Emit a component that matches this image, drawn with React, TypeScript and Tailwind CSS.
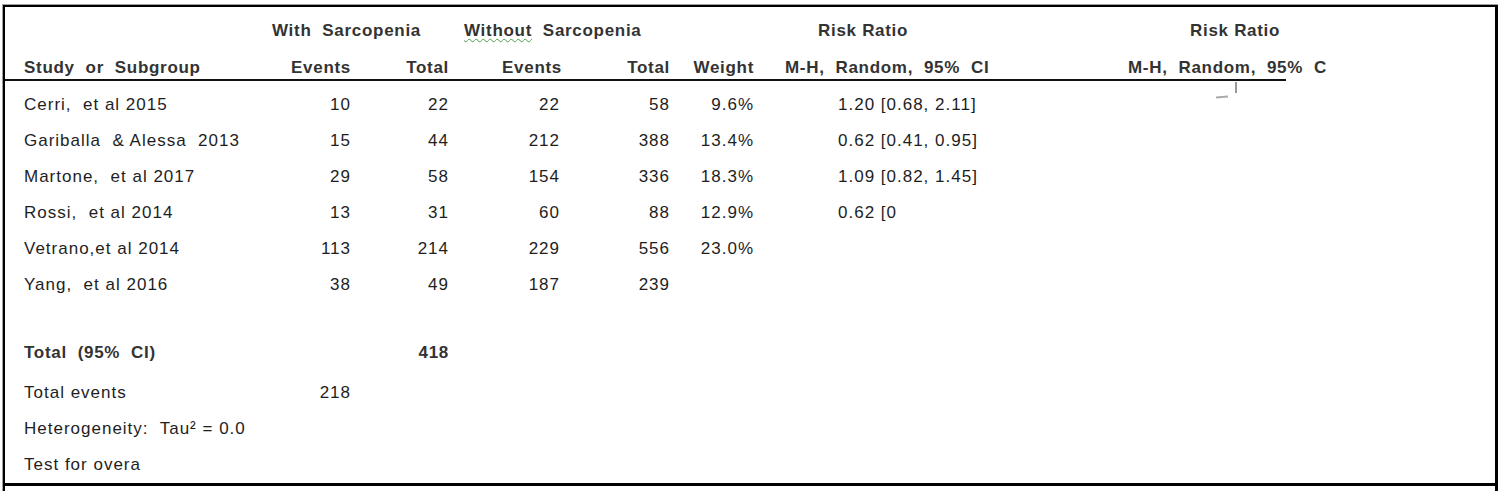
const cols = "grid grid-cols-[255px_91px_98px_111px_110px_84px_246px_1fr] items-center";

type Study = {
  name: string;
  e1: string;
  t1: string;
  e2: string;
  t2: string;
  weight: string;
  rr: string;
};

const studies: Study[] = [
  { name: "Cerri,  et al 2015", e1: "10", t1: "22", e2: "22", t2: "58", weight: "9.6%", rr: "1.20 [0.68, 2.11]" },
  { name: "Gariballa  & Alessa  2013", e1: "15", t1: "44", e2: "212", t2: "388", weight: "13.4%", rr: "0.62 [0.41, 0.95]" },
  { name: "Martone,  et al 2017", e1: "29", t1: "58", e2: "154", t2: "336", weight: "18.3%", rr: "1.09 [0.82, 1.45]" },
  { name: "Rossi,  et al 2014", e1: "13", t1: "31", e2: "60", t2: "88", weight: "12.9%", rr: "0.62 [0" },
  { name: "Vetrano,et al 2014", e1: "113", t1: "214", e2: "229", t2: "556", weight: "23.0%", rr: "" },
  { name: "Yang,  et al 2016", e1: "38", t1: "49", e2: "187", t2: "239", weight: "", rr: "" },
];

function StudyRow({ s }: { s: Study }) {
  return (
    <div className={`${cols} h-[36px]`}>
      <div className="pl-[19px] whitespace-pre">{s.name}</div>
      <div className="text-right">{s.e1}</div>
      <div className="text-right">{s.t1}</div>
      <div className="text-right">{s.e2}</div>
      <div className="text-right">{s.t2}</div>
      <div className="text-right">{s.weight}</div>
      <div className="pl-[84px] whitespace-pre">{s.rr}</div>
      <div />
    </div>
  );
}

export default function App() {
  return (
    <div className="w-[1500px] h-[491px] bg-white overflow-hidden font-['Liberation_Sans',Arial,sans-serif] text-[17px] tracking-[1px] text-[#1e1e1e]">
      <div className="ml-[2px] mt-[4px] w-[1496px] h-[487px] border-t border-l border-[#a0a0a0]">
        <div className="h-full border-t-2 border-l-2 border-r-[3px] border-black flex flex-col">
          {/* header line 1 */}
          <div className={`${cols} h-[48px] font-bold tracking-[0.7px] text-[#333]`}>
            <div />
            <div className="col-span-2 pl-[12px] whitespace-pre">With  Sarcopenia</div>
            <div className="col-span-2 pl-[15px] whitespace-pre">
              <span className="underline decoration-wavy decoration-[#4c9c4c] decoration-1 underline-offset-[2px]">Without</span>  Sarcopenia
            </div>
            <div />
            <div className="pl-[64px]">Risk Ratio</div>
            <div className="pl-[190px]">Risk Ratio</div>
          </div>
          {/* header line 2 */}
          <div className={`${cols} h-[24px] font-bold tracking-[0.7px] text-[#333]`}>
            <div className="pl-[19px] whitespace-pre">Study  or  Subgroup</div>
            <div className="text-right">Events</div>
            <div className="text-right">Total</div>
            <div className="text-right -mr-[2px]">Events</div>
            <div className="text-right">Total</div>
            <div className="text-right">Weight</div>
            <div className="pl-[31px] whitespace-pre">M-H,  Random,  95%  CI</div>
            <div className="pl-[128px] whitespace-pre">M-H,  Random,  95%  C</div>
          </div>
          <div className="w-[1281px] h-[2px] bg-[#111]" />

          {/* studies */}
          <div className="relative pt-[6px]">
            <svg className="absolute left-[1206px] top-0" width="28" height="20" viewBox="0 0 28 20">
              <line x1="25" y1="1" x2="25" y2="12" stroke="#9a9a9a" strokeWidth="2" />
              <line x1="5" y1="16.5" x2="17" y2="15.5" stroke="#aaaaaa" strokeWidth="2" />
            </svg>
            {studies.map((s) => (
              <StudyRow key={s.name} s={s} />
            ))}
          </div>

          {/* totals */}
          <div className={`${cols} h-[36px] mt-[32px] font-bold tracking-[0.7px] text-[#333]`}>
            <div className="pl-[19px] whitespace-pre">Total  (95%  CI)</div>
            <div />
            <div className="text-right">418</div>
          </div>
          <div className={`${cols} h-[36px] mt-[4px]`}>
            <div className="pl-[19px]">Total events</div>
            <div className="text-right">218</div>
          </div>
          <div className={`${cols} h-[35px]`}>
            <div className="col-span-3 pl-[19px] whitespace-pre">Heterogeneity:  Tau² = 0.0</div>
          </div>
          <div className={`${cols} h-[37px]`}>
            <div className="pl-[19px]">Test for overa</div>
          </div>
          <div className="h-[3px] bg-black" />
        </div>
      </div>
    </div>
  );
}
